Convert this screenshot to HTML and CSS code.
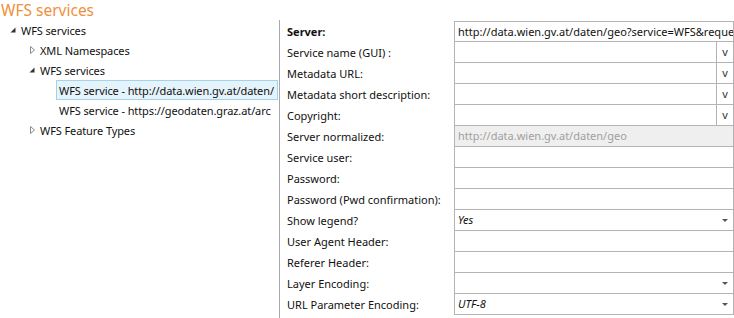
FILE: index.html
```html
<!DOCTYPE html>
<html lang="en">
<head>
    <meta charset="UTF-8">
    <title>WFS services</title>
    <link rel="stylesheet" href="styles.css">
</head>
<body>
    <h1 class="page-title">WFS services</h1>
    <div class="layout">
        <div class="tree">
            <div class="node level-0">
                <svg class="toggle" viewBox="0 0 12 12"><path d="M3.5 8.5 L8.5 8.5 L8.5 3.5 Z" fill="#333"/></svg>
                <span>WFS services</span>
            </div>
            <div class="node level-1">
                <svg class="toggle" viewBox="0 0 12 12"><path d="M4.5 2.5 L8.5 6 L4.5 9.5 Z" fill="none" stroke="#8a8a8a"/></svg>
                <span>XML Namespaces</span>
            </div>
            <div class="node level-1">
                <svg class="toggle" viewBox="0 0 12 12"><path d="M3.5 8.5 L8.5 8.5 L8.5 3.5 Z" fill="#333"/></svg>
                <span>WFS services</span>
            </div>
            <div class="node level-2 selected">
                <span>WFS service - http://data.wien.gv.at/daten/</span>
            </div>
            <div class="node level-2">
                <span>WFS service - https://geodaten.graz.at/arc</span>
            </div>
            <div class="node level-1">
                <svg class="toggle" viewBox="0 0 12 12"><path d="M4.5 2.5 L8.5 6 L4.5 9.5 Z" fill="none" stroke="#8a8a8a"/></svg>
                <span>WFS Feature Types</span>
            </div>
        </div>

        <div class="form">
            <div class="row first">
                <label class="bold">Server:</label>
                <div class="field"><span class="value">http://data.wien.gv.at/daten/geo?service=WFS&amp;request=GetCapabilities</span></div>
            </div>
            <div class="row">
                <label>Service name (GUI) :</label>
                <div class="field"><span class="value"></span><span class="more">v</span></div>
            </div>
            <div class="row">
                <label>Metadata URL:</label>
                <div class="field"><span class="value"></span><span class="more">v</span></div>
            </div>
            <div class="row">
                <label>Metadata short description:</label>
                <div class="field"><span class="value"></span><span class="more">v</span></div>
            </div>
            <div class="row">
                <label>Copyright:</label>
                <div class="field"><span class="value"></span><span class="more">v</span></div>
            </div>
            <div class="row">
                <label>Server normalized:</label>
                <div class="field disabled"><span class="value">http://data.wien.gv.at/daten/geo</span></div>
            </div>
            <div class="row">
                <label>Service user:</label>
                <div class="field"><span class="value"></span></div>
            </div>
            <div class="row">
                <label>Password:</label>
                <div class="field"><span class="value"></span></div>
            </div>
            <div class="row">
                <label>Password (Pwd confirmation):</label>
                <div class="field"><span class="value"></span></div>
            </div>
            <div class="row">
                <label>Show legend?</label>
                <div class="field select"><span class="value italic">Yes</span><span class="arrow"></span></div>
            </div>
            <div class="row">
                <label>User Agent Header:</label>
                <div class="field"><span class="value"></span></div>
            </div>
            <div class="row">
                <label>Referer Header:</label>
                <div class="field"><span class="value"></span></div>
            </div>
            <div class="row">
                <label>Layer Encoding:</label>
                <div class="field select"><span class="value"></span><span class="arrow"></span></div>
            </div>
            <div class="row">
                <label>URL Parameter Encoding:</label>
                <div class="field select"><span class="value italic">UTF-8</span><span class="arrow"></span></div>
            </div>
        </div>
    </div>
</body>
</html>
```

FILE: styles.css
```css
* {
    margin: 0;
    padding: 0;
    box-sizing: border-box;
}

body {
    font-family: 'Noto Sans', 'Open Sans', sans-serif;
    font-size: 11px;
    color: #111;
    background: white;
    width: 734px;
    height: 318px;
    overflow: hidden;
}

.page-title {
    font-weight: normal;
    font-size: 15.5px;
    color: #f0903c;
    height: 20px;
    line-height: 20px;
    padding-left: 1px;
}

.layout {
    display: flex;
    height: 298px;
}

/* tree on the left */
.tree {
    width: 280px;
    flex-shrink: 0;
    border-right: 1px solid #a8a8a8;
    padding-right: 1px;
}

.node {
    height: 20px;
    display: flex;
    align-items: center;
    white-space: nowrap;
    letter-spacing: -0.1px;
}

.node .toggle {
    width: 12px;
    height: 12px;
    margin-right: 2px;
}

.level-0 { padding-left: 7px; }
.level-1 { padding-left: 26px; }
.level-2 { padding-left: 59px; }

.node.selected {
    margin-left: 56px;
    padding-left: 2px;
    background: #e5f3fb;
    border: 1px solid #9fd3f0;
}

/* property form on the right */
.form {
    flex: 1;
    min-width: 0;
    padding-left: 7px;
    padding-top: 1px;
}

.row {
    display: flex;
    height: 21px;
}

.row label {
    width: 167px;
    flex-shrink: 0;
    line-height: 21px;
    white-space: nowrap;
}

.row label.bold {
    font-weight: bold;
}

.field {
    flex: 1;
    min-width: 0;
    display: flex;
    border: 1px solid #b4b4b4;
    border-top: none;
    overflow: hidden;
}

.row.first .field {
    border-top: 1px solid #b4b4b4;
}

.field .value {
    flex: 1;
    min-width: 0;
    padding-left: 3px;
    line-height: 19px;
    white-space: nowrap;
    overflow: hidden;
}

.field .value.italic {
    font-style: italic;
}

.field .more {
    width: 17px;
    flex-shrink: 0;
    border-left: 1px solid #b4b4b4;
    text-align: center;
    line-height: 19px;
    color: #333;
    font-size: 11px;
}

.field.disabled {
    background: #efefef;
}

.field.disabled .value {
    color: #a0a0a0;
}

.field .arrow {
    width: 0;
    height: 0;
    flex-shrink: 0;
    margin: 9px 5px 0 0;
    border-left: 3px solid transparent;
    border-right: 3px solid transparent;
    border-top: 3px solid #555;
}
```
